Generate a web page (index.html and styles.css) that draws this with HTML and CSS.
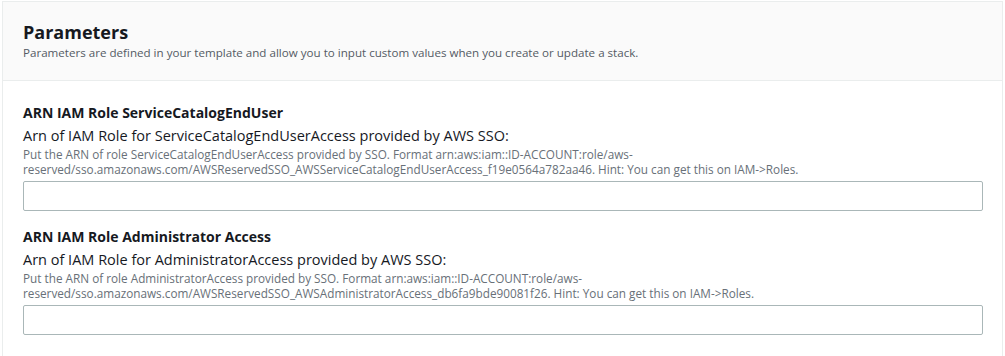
FILE: index.html
```html
<!DOCTYPE html>
<html>
<head>
<meta charset="utf-8">
<link rel="stylesheet" href="styles.css">
</head>
<body>
<div class="card">
  <div class="card-header">
    <h2 class="title">Parameters</h2>
    <p class="subtitle">Parameters are defined in your template and allow you to input custom values when you create or update a stack.</p>
  </div>
  <div class="card-body">
    <div class="field">
      <h3 class="field-heading">ARN IAM Role ServiceCatalogEndUser</h3>
      <label class="field-label">Arn of IAM Role for ServiceCatalogEndUserAccess provided by AWS SSO:</label>
      <p class="field-desc">Put the ARN of role ServiceCatalogEndUserAccess provided by SSO. Format arn:aws:iam::ID-ACCOUNT:role/aws-reserved/sso.amazonaws.com/AWSReservedSSO_AWSServiceCatalogEndUserAccess_f19e0564a782aa46. Hint: You can get this on IAM-&gt;Roles.</p>
      <input class="field-input" type="text">
    </div>
    <div class="field">
      <h3 class="field-heading">ARN IAM Role Administrator Access</h3>
      <label class="field-label">Arn of IAM Role for AdministratorAccess provided by AWS SSO:</label>
      <p class="field-desc">Put the ARN of role AdministratorAccess provided by SSO. Format arn:aws:iam::ID-ACCOUNT:role/aws-reserved/sso.amazonaws.com/AWSReservedSSO_AWSAdministratorAccess_db6fa9bde90081f26. Hint: You can get this on IAM-&gt;Roles.</p>
      <input class="field-input" type="text">
    </div>
  </div>
</div>
</body>
</html>
```

FILE: styles.css
```css
* { box-sizing: border-box; }
html, body { margin: 0; padding: 0; background: #ffffff; }
body {
  font-family: "Open Sans", "Noto Sans", sans-serif;
  color: #16191f;
  padding: 1px 2px 0 2px;
  overflow: hidden;
  height: 356px;
}
.card {
  border: 1px solid #eaeded;
  border-bottom: none;
  width: 1001px;
  height: 355px;
}
.card-header {
  background: #fafafa;
  border-bottom: 1px solid #eaeded;
  padding: 17px 20px 0 20px;
  height: 79px;
}
.title {
  margin: 0;
  font-size: 18px;
  font-weight: 700;
  line-height: 26px;
}
.subtitle {
  margin: 0;
  font-size: 11.6px;
  line-height: 16px;
  color: #545b64;
}
.card-body {
  padding: 21px 20px 0 20px;
}
.field {
  display: flex;
  flex-direction: column;
  margin-bottom: 15px;
}
.field-heading {
  margin: 0;
  font-size: 14px;
  font-weight: 700;
  line-height: 22px;
}
.field-label {
  font-size: 14.5px;
  line-height: 22px;
  margin-top: 1px;
}
.field-desc {
  margin: 0;
  font-size: 11.75px;
  line-height: 15px;
  color: #687078;
}
.field-input {
  margin-top: 4px;
  height: 30px;
  width: 960px;
  border: 1px solid #aab7b8;
  border-radius: 2px;
  background: #fff;
  outline: none;
}
```
